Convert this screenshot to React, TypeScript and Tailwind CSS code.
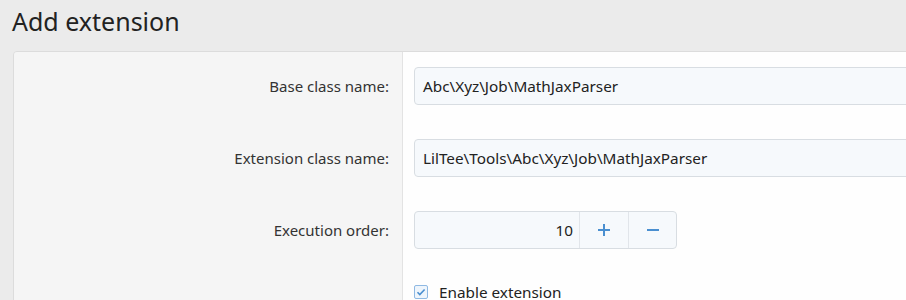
import React from "react";

const font = { fontFamily: '"Noto Sans", "Open Sans", sans-serif' };

function Row({ label, children, height = "h-[72px]" }: { label: string; children: React.ReactNode; height?: string }) {
  return (
    <div className={`flex ${height}`}>
      <div className="w-[389px] shrink-0 bg-[#f5f5f5] border-r border-[#e3e3e3] pt-[15px] pr-[13px]">
        <div className="h-[38px] flex items-center justify-end text-[15px] text-[#333]">{label}</div>
      </div>
      <div className="flex-1 bg-[#fefefe] pt-[15px] pl-[11px]">{children}</div>
    </div>
  );
}

export default function App() {
  return (
    <div className="w-full h-[300px] overflow-hidden bg-[#ebebeb]" style={font}>
      <h1 className="pl-[12px] pt-[4px] h-[51px] text-[25px] leading-[35px] text-[#222] font-normal">Add extension</h1>
      <div className="ml-[13px] mr-[-20px] border border-[#dcdcdc] rounded-tl-[4px] overflow-hidden">
        <Row label="Base class name:">
          <div className="h-[38px] w-[600px] flex items-center px-[8px] bg-[#f6f9fc] border border-[#d8dde2] rounded-[4px] text-[15.3px] text-[#222]">
            Abc\Xyz\Job\MathJaxParser
          </div>
        </Row>
        <Row label="Extension class name:">
          <div className="h-[38px] w-[600px] flex items-center px-[8px] bg-[#f6f9fc] border border-[#d8dde2] rounded-[4px] text-[15.3px] text-[#222]">
            LilTee\Tools\Abc\Xyz\Job\MathJaxParser
          </div>
        </Row>
        <Row label="Execution order:">
          <div className="h-[38px] w-[263px] flex bg-[#f6f9fc] border border-[#d8dde2] rounded-[4px] text-[15.3px] text-[#222]">
            <div className="w-[164px] flex items-center justify-end pr-[6px]">10</div>
            <div className="w-[49px] border-l border-[#e1e5ea] flex items-center justify-center">
              <svg width="14" height="14" viewBox="0 0 14 14"><path d="M7 1v12M1 7h12" stroke="#4a8fd0" strokeWidth="2" /></svg>
            </div>
            <div className="flex-1 border-l border-[#e1e5ea] flex items-center justify-center">
              <svg width="14" height="14" viewBox="0 0 14 14"><path d="M1 7h12" stroke="#4a8fd0" strokeWidth="2" /></svg>
            </div>
          </div>
        </Row>
        <div className="flex h-[60px]">
          <div className="w-[389px] shrink-0 bg-[#f5f5f5] border-r border-[#e3e3e3]" />
          <div className="flex-1 bg-[#fefefe] pt-[16px] pl-[11px] flex items-start gap-[11px]">
            <div className="mt-[1px] w-[14px] h-[14px] border border-[#8fb9e3] rounded-[2px] bg-[#eef5fc] flex items-center justify-center">
              <svg width="10" height="10" viewBox="0 0 10 10"><path d="M1.5 5.2l2.3 2.3L8.6 2.5" fill="none" stroke="#4a8fd0" strokeWidth="1.6" /></svg>
            </div>
            <span className="text-[15.3px] leading-[16px] text-[#222]">Enable extension</span>
          </div>
        </div>
      </div>
    </div>
  );
}
